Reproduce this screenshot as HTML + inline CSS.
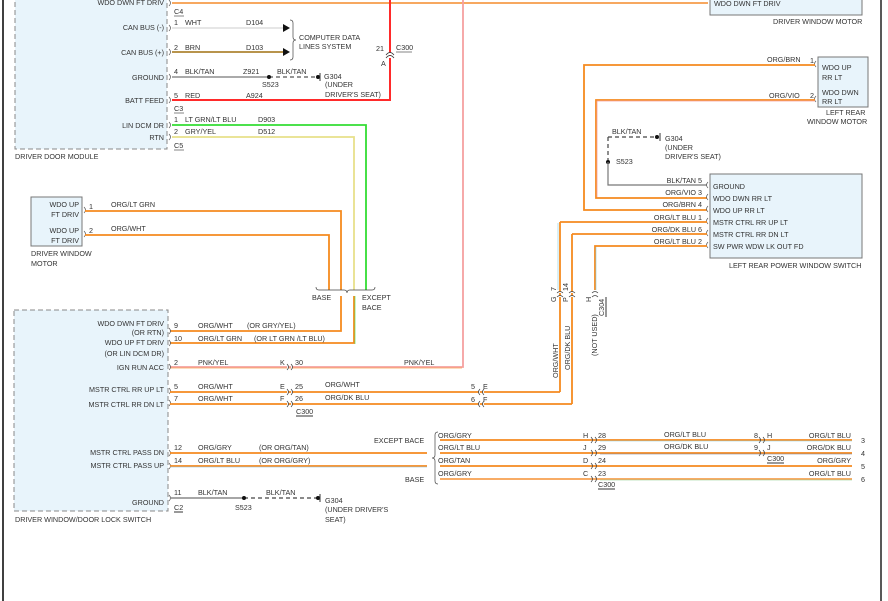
<!DOCTYPE html>
<html><head><meta charset="utf-8"><style>
html,body{margin:0;padding:0;background:#fff;}
svg{display:block;}
text{font-family:"Liberation Sans",sans-serif;font-size:7.2px;fill:#333;}
.r{text-anchor:end;}
</style></head><body>
<svg width="888" height="601" viewBox="0 0 888 601" xmlns="http://www.w3.org/2000/svg">
<!-- frame -->
<line x1="3" y1="0" x2="3" y2="601" stroke="#000" stroke-width="1.5"/>
<line x1="881" y1="0" x2="881" y2="601" stroke="#222" stroke-width="1.5"/>

<!-- driver door module box -->
<rect x="15" y="-5" width="152" height="154" fill="#e8f4fb" stroke="#888" stroke-dasharray="5,3"/>
<text x="15" y="159">DRIVER DOOR MODULE</text>
<text class="r" x="164" y="5">WDO DWN FT DRIV</text>
<text x="174" y="14">C4</text><line x1="174" y1="16" x2="184" y2="16" stroke="#333" stroke-width="0.6"/>
<text class="r" x="164" y="30">CAN BUS (-)</text>
<text class="r" x="164" y="55">CAN BUS (+)</text>
<text class="r" x="164" y="80">GROUND</text>
<text class="r" x="164" y="103">BATT FEED</text>
<text x="174" y="111">C3</text><line x1="174" y1="113" x2="184" y2="113" stroke="#333" stroke-width="0.6"/>
<text class="r" x="164" y="128">LIN DCM DR</text>
<text class="r" x="164" y="140">RTN</text>
<text x="174" y="148">C5</text><line x1="174" y1="150" x2="184" y2="150" stroke="#333" stroke-width="0.6"/>

<!-- top wire -->
<line x1="172" y1="3" x2="708" y2="3" stroke="#f7a860" stroke-width="2"/>
<!-- red batt feed -->
<polyline points="172,100 390,100 390,0" fill="none" stroke="#ff2a2a" stroke-width="2"/>
<path d="M386,55 q4,-5 8,0 M386,58 q4,-5 8,0" fill="#fff" stroke="#333" stroke-width="0.8"/>
<text x="376" y="51">21</text><text x="396" y="50">C300</text><line x1="396" y1="52" x2="412" y2="52" stroke="#333" stroke-width="0.6"/>
<text x="381" y="66">A</text>
<text x="185" y="98">RED</text><text x="246" y="98">A924</text>
<text x="325" y="87">(UNDER</text><text x="325" y="97">DRIVER'S SEAT)</text>

<!-- CAN wires -->
<line x1="172" y1="28" x2="284" y2="28" stroke="#ddd" stroke-width="1.5"/>
<path d="M283,24 l7,4 l-7,4z" fill="#111"/>
<line x1="172" y1="52" x2="284" y2="52" stroke="#a07010" stroke-width="1.5"/>
<path d="M283,48 l7,4 l-7,4z" fill="#111"/>
<text x="174" y="25">1</text><text x="185" y="25">WHT</text><text x="246" y="25">D104</text>
<text x="174" y="50">2</text><text x="185" y="50">BRN</text><text x="246" y="50">D103</text>
<path d="M290,20 q3,0 3,3 v14 q0,3 3,3 q-3,0 -3,3 v14 q0,3 -3,3" fill="none" stroke="#444" stroke-width="0.7"/>
<text x="299" y="40">COMPUTER DATA</text><text x="299" y="49">LINES SYSTEM</text>

<!-- ground -->
<line x1="172" y1="77" x2="269" y2="77" stroke="#777" stroke-width="1.2"/>
<line x1="269" y1="77" x2="318" y2="77" stroke="#555" stroke-width="1.2" stroke-dasharray="4,3"/>
<circle cx="269" cy="77" r="2" fill="#111"/><circle cx="318" cy="77" r="2" fill="#111"/>
<line x1="320" y1="73" x2="320" y2="81" stroke="#333"/>
<text x="174" y="74">4</text><text x="185" y="74">BLK/TAN</text><text x="243" y="74">Z921</text><text x="277" y="74">BLK/TAN</text>
<text x="262" y="87">S523</text><text x="324" y="79">G304</text>
<text x="174" y="98">5</text>

<!-- LIN / RTN -->
<polyline points="172,125 366,125 366,290" fill="none" stroke="#33dd33" stroke-width="1.8"/>
<polyline points="172,137 354,137 354,290" fill="none" stroke="#e8e08a" stroke-width="1.8"/>
<text x="174" y="122">1</text><text x="185" y="122">LT GRN/LT BLU</text><text x="258" y="122">D903</text>
<text x="174" y="134">2</text><text x="185" y="134">GRY/YEL</text><text x="258" y="134">D512</text>

<!-- pin brackets on module -->
<g stroke="#555" stroke-width="0.7" fill="none">
<path d="M169,0 q3,3 0,6"/><path d="M169,25 q3,3 0,6"/><path d="M169,49 q3,3 0,6"/><path d="M169,74 q3,3 0,6"/><path d="M169,97 q3,3 0,6"/><path d="M169,122 q3,3 0,6"/><path d="M169,134 q3,3 0,6"/>
</g>

<!-- driver window motor -->
<rect x="31" y="197" width="51" height="49" fill="#e8f4fb" stroke="#777"/>
<text class="r" x="79" y="207">WDO UP</text><text class="r" x="79" y="217">FT DRIV</text>
<text class="r" x="79" y="233">WDO UP</text><text class="r" x="79" y="243">FT DRIV</text>
<text x="31" y="256">DRIVER WINDOW</text><text x="31" y="266">MOTOR</text>
<text x="89" y="209">1</text><text x="89" y="233">2</text>
<path d="M84,207 q3,3 0,6 M84,231 q3,3 0,6" stroke="#555" stroke-width="0.7" fill="none"/>
<polyline points="85,211 341,211 341,290" fill="none" stroke="#f58a1f" stroke-width="1.8"/>
<polyline points="85,235 329,235 329,290" fill="none" stroke="#f58a1f" stroke-width="1.8"/>
<text x="111" y="207">ORG/LT GRN</text><text x="111" y="231">ORG/WHT</text>
<path d="M316,287 q0,3 3,3 h25 q3,0 3,3 q0,-3 3,-3 h22 q3,0 3,-3" fill="none" stroke="#444" stroke-width="0.7"/>
<text x="312" y="300">BASE</text><text x="362" y="300">EXCEPT</text><text x="362" y="310">BACE</text>
<polyline points="341,296 341,331 170,331" fill="none" stroke="#f58a1f" stroke-width="1.8"/>
<polyline points="354,296 354,343 170,343" fill="none" stroke="#f58a1f" stroke-width="1.8"/>
<line x1="354" y1="296" x2="354" y2="344" stroke="#4d4" stroke-width="0.6" transform="translate(1,0)"/>

<!-- pink vertical -->
<polyline points="170,367 463,367 463,0" fill="none" stroke="#f5a0a0" stroke-width="1.8"/>
<line x1="170" y1="368" x2="462" y2="368" stroke="#f7a050" stroke-width="0.8"/>

<!-- lower switch box -->
<rect x="14" y="310" width="154" height="201" fill="#e8f4fb" stroke="#888" stroke-dasharray="5,3"/>
<text x="15" y="522">DRIVER WINDOW/DOOR LOCK SWITCH</text>
<text class="r" x="164" y="326">WDO DWN FT DRIV</text><text class="r" x="164" y="335">(OR RTN)</text>
<text class="r" x="164" y="345">WDO UP FT DRIV</text><text class="r" x="164" y="356">(OR LIN DCM DR)</text>
<text class="r" x="164" y="370">IGN RUN ACC</text>
<text class="r" x="164" y="392">MSTR CTRL RR UP LT</text>
<text class="r" x="164" y="407">MSTR CTRL RR DN LT</text>
<text class="r" x="164" y="455">MSTR CTRL PASS DN</text>
<text class="r" x="164" y="468">MSTR CTRL PASS UP</text>
<text class="r" x="164" y="505">GROUND</text>
<g stroke="#555" stroke-width="0.7" fill="none">
<path d="M169,328 q3,3 0,6"/><path d="M169,340 q3,3 0,6"/><path d="M169,364 q3,3 0,6"/><path d="M169,388 q3,3 0,6"/><path d="M169,400 q3,3 0,6"/><path d="M169,450 q3,3 0,6"/><path d="M169,463 q3,3 0,6"/><path d="M169,495 q3,3 0,6"/>
</g>
<text x="174" y="328">9</text><text x="198" y="328">ORG/WHT</text><text x="247" y="328">(OR GRY/YEL)</text>
<text x="174" y="341">10</text><text x="198" y="341">ORG/LT GRN</text><text x="254" y="341">(OR LT GRN /LT BLU)</text>
<text x="174" y="365">2</text><text x="198" y="365">PNK/YEL</text><text x="404" y="365">PNK/YEL</text>
<text x="280" y="365">K</text><text x="295" y="365">30</text>

<line x1="170" y1="392" x2="560" y2="392" stroke="#f58a1f" stroke-width="1.8"/>
<line x1="560" y1="392" x2="560" y2="222" stroke="#f58a1f" stroke-width="1.8"/>
<line x1="170" y1="404" x2="572" y2="404" stroke="#f58a1f" stroke-width="1.8"/>
<line x1="572" y1="404" x2="572" y2="234" stroke="#f58a1f" stroke-width="1.8"/>
<text x="174" y="389">5</text><text x="198" y="389">ORG/WHT</text><text x="280" y="389">E</text><text x="295" y="389">25</text><text x="325" y="387">ORG/WHT</text>
<text x="174" y="401">7</text><text x="198" y="401">ORG/WHT</text><text x="280" y="401">F</text><text x="295" y="401">26</text><text x="325" y="400">ORG/DK BLU</text>
<text x="471" y="389">5</text><text x="483" y="389">E</text><text x="471" y="402">6</text><text x="483" y="402">F</text>
<text x="296" y="414">C300</text><line x1="296" y1="416" x2="313" y2="416" stroke="#333"/>
<g stroke="#444" stroke-width="0.8" fill="#fff">
<path d="M287,364 q3,3 0,6 M291,364 q3,3 0,6"/>
<path d="M287,389 q3,3 0,6 M291,389 q3,3 0,6"/>
<path d="M287,401 q3,3 0,6 M291,401 q3,3 0,6"/>
<path d="M480,389 q-3,3 0,6 M484,389 q-3,3 0,6"/>
<path d="M480,401 q-3,3 0,6 M484,401 q-3,3 0,6"/>
</g>

<!-- pass wires -->
<line x1="170" y1="453" x2="427" y2="453" stroke="#f58a1f" stroke-width="1.8"/>
<line x1="170" y1="466" x2="427" y2="466" stroke="#f58a1f" stroke-width="1.8"/>
<line x1="170" y1="467" x2="427" y2="467" stroke="#8bd" stroke-width="0.6"/>
<text x="174" y="450">12</text><text x="198" y="450">ORG/GRY</text><text x="259" y="450">(OR ORG/TAN)</text>
<text x="174" y="463">14</text><text x="198" y="463">ORG/LT BLU</text><text x="259" y="463">(OR ORG/GRY)</text>
<path d="M438,432 q-3,0 -3,3 v20 q0,3 -3,3 q3,0 3,3 v20 q0,3 3,3" fill="none" stroke="#444" stroke-width="0.7"/>
<text x="374" y="443">EXCEPT BACE</text><text x="405" y="482">BASE</text>
<line x1="440" y1="440" x2="852" y2="440" stroke="#f58a1f" stroke-width="1.8"/>
<line x1="440" y1="453" x2="852" y2="453" stroke="#f58a1f" stroke-width="1.8"/>
<line x1="600" y1="454" x2="852" y2="454" stroke="#778" stroke-width="0.6"/>
<line x1="440" y1="466" x2="852" y2="466" stroke="#f58a1f" stroke-width="1.8"/>
<line x1="440" y1="479" x2="852" y2="479" stroke="#f7a050" stroke-width="1.8"/>
<line x1="600" y1="441" x2="852" y2="441" stroke="#8cd" stroke-width="0.5"/>
<line x1="600" y1="480" x2="852" y2="480" stroke="#8c8" stroke-width="0.5"/>
<text x="438" y="438">ORG/GRY</text><text x="438" y="450">ORG/LT BLU</text><text x="438" y="463">ORG/TAN</text><text x="438" y="476">ORG/GRY</text>
<text x="583" y="438">H</text><text x="598" y="438">28</text>
<text x="583" y="450">J</text><text x="598" y="450">29</text>
<text x="583" y="463">D</text><text x="598" y="463">24</text>
<text x="583" y="476">C</text><text x="598" y="476">23</text>
<text x="598" y="487">C300</text><line x1="598" y1="489" x2="615" y2="489" stroke="#333"/>
<text x="664" y="437">ORG/LT BLU</text><text x="664" y="449">ORG/DK BLU</text>
<text x="754" y="438">8</text><text x="767" y="438">H</text><text x="754" y="450">9</text><text x="767" y="450">J</text>
<text x="767" y="461">C300</text><line x1="767" y1="463" x2="784" y2="463" stroke="#333"/>
<text class="r" x="851" y="438">ORG/LT BLU</text><text class="r" x="851" y="450">ORG/DK BLU</text><text class="r" x="851" y="463">ORG/GRY</text><text class="r" x="851" y="476">ORG/LT BLU</text>
<text x="861" y="443">3</text><text x="861" y="456">4</text><text x="861" y="469">5</text><text x="861" y="482">6</text>
<g stroke="#444" stroke-width="0.8" fill="none">
<path d="M591,437 q3,3 0,6 M595,437 q3,3 0,6"/><path d="M591,450 q3,3 0,6 M595,450 q3,3 0,6"/>
<path d="M591,463 q3,3 0,6 M595,463 q3,3 0,6"/><path d="M591,476 q3,3 0,6 M595,476 q3,3 0,6"/>
<path d="M759,437 q3,3 0,6 M763,437 q3,3 0,6"/><path d="M759,450 q3,3 0,6 M763,450 q3,3 0,6"/>
</g>

<!-- lower ground -->
<line x1="170" y1="498" x2="244" y2="498" stroke="#888" stroke-width="1.5"/>
<line x1="244" y1="498" x2="318" y2="498" stroke="#444" stroke-width="1.2" stroke-dasharray="4,3"/>
<circle cx="244" cy="498" r="2" fill="#111"/><circle cx="318" cy="498" r="2" fill="#111"/>
<line x1="320" y1="494" x2="320" y2="502" stroke="#333"/>
<text x="174" y="495">11</text><text x="198" y="495">BLK/TAN</text><text x="266" y="495">BLK/TAN</text>
<text x="235" y="510">S523</text><text x="174" y="510">C2</text><line x1="174" y1="512" x2="183" y2="512" stroke="#333"/>
<text x="325" y="503">G304</text><text x="325" y="512">(UNDER DRIVER'S</text><text x="325" y="522">SEAT)</text>

<!-- top right driver window motor -->
<rect x="710" y="-5" width="152" height="20" fill="#e8f4fb" stroke="#777"/>
<text x="714" y="6">WDO DWN FT DRIV</text>
<text x="773" y="24">DRIVER WINDOW MOTOR</text>

<!-- left rear window motor -->
<rect x="818" y="57" width="50" height="50" fill="#e8f4fb" stroke="#777"/>
<text x="822" y="70">WDO UP</text><text x="822" y="80">RR LT</text><text x="822" y="95">WDO DWN</text><text x="822" y="104">RR LT</text>
<text x="826" y="115">LEFT REAR</text><text x="807" y="124">WINDOW MOTOR</text>
<text x="810" y="63">1</text><text x="810" y="98">2</text>
<path d="M816,61 q-3,3 0,6 M816,96 q-3,3 0,6" stroke="#555" stroke-width="0.7" fill="none"/>
<text x="767" y="62">ORG/BRN</text><text x="769" y="98">ORG/VIO</text>
<polyline points="815,65 584,65 584,210 707,210" fill="none" stroke="#f58a1f" stroke-width="1.8"/>
<polyline points="815,100 596,100 596,198 707,198" fill="none" stroke="#f58a1f" stroke-width="1.8"/>
<polyline points="815,101 597,101 597,197" fill="none" stroke="#f5a0a0" stroke-width="0.8"/>

<!-- BLK/TAN ground right -->
<line x1="608" y1="137" x2="608" y2="160" stroke="#444" stroke-width="1.2" stroke-dasharray="4,3"/>
<line x1="608" y1="137" x2="657" y2="137" stroke="#444" stroke-width="1.2" stroke-dasharray="4,3"/>
<circle cx="657" cy="137" r="2" fill="#111"/><line x1="660" y1="133" x2="660" y2="141" stroke="#333"/>
<circle cx="608" cy="162" r="2" fill="#111"/>
<polyline points="608,162 608,185 707,185" fill="none" stroke="#777" stroke-width="1.2"/>
<text x="612" y="134">BLK/TAN</text><text x="665" y="141">G304</text><text x="665" y="150">(UNDER</text><text x="665" y="159">DRIVER'S SEAT)</text>
<text x="616" y="164">S523</text>

<!-- left rear power window switch -->
<rect x="710" y="174" width="152" height="84" fill="#e8f4fb" stroke="#777"/>
<text x="713" y="189">GROUND</text><text x="713" y="201">WDO DWN RR LT</text><text x="713" y="213">WDO UP RR LT</text>
<text x="713" y="225">MSTR CTRL RR UP LT</text><text x="713" y="237">MSTR CTRL RR DN LT</text><text x="713" y="249">SW PWR WDW LK OUT FD</text>
<text x="729" y="268">LEFT REAR POWER WINDOW SWITCH</text>
<g stroke="#555" stroke-width="0.7" fill="none">
<path d="M708,182 q-3,3 0,6"/><path d="M708,194 q-3,3 0,6"/><path d="M708,206 q-3,3 0,6"/><path d="M708,218 q-3,3 0,6"/><path d="M708,230 q-3,3 0,6"/><path d="M708,242 q-3,3 0,6"/>
</g>
<text class="r" x="702" y="183">BLK/TAN  5</text><text class="r" x="702" y="195">ORG/VIO  3</text><text class="r" x="702" y="207">ORG/BRN  4</text>
<text class="r" x="702" y="220">ORG/LT BLU  1</text><text class="r" x="702" y="232">ORG/DK BLU  6</text><text class="r" x="702" y="244">ORG/LT BLU  2</text>
<polyline points="707,222 560,222" fill="none" stroke="#f58a1f" stroke-width="1.8"/>
<line x1="558" y1="223" x2="558" y2="290" stroke="#8cd" stroke-width="0.6"/>
<polyline points="707,234 572,234" fill="none" stroke="#f58a1f" stroke-width="1.8"/>
<polyline points="707,246 595,246 595,290" fill="none" stroke="#f58a1f" stroke-width="1.8"/>
<line x1="596" y1="247" x2="596" y2="290" stroke="#8cd" stroke-width="0.6"/>
<g stroke="#444" stroke-width="0.8" fill="#fff">
<path d="M557,293 q3,-3 6,0 M557,297 q3,-3 6,0"/>
<path d="M569,293 q3,-3 6,0 M569,297 q3,-3 6,0"/>
<path d="M592,293 q3,-3 6,0 M592,297 q3,-3 6,0"/>
</g>
<text transform="translate(556,302) rotate(-90)">G</text><text transform="translate(556,291) rotate(-90)">7</text>
<text transform="translate(568,302) rotate(-90)">P</text><text transform="translate(568,291) rotate(-90)">14</text>
<text transform="translate(591,302) rotate(-90)">H</text>
<text transform="translate(604,316) rotate(-90)">C304</text>
<line x1="606" y1="297" x2="606" y2="317" stroke="#333"/>
<text transform="translate(558,378) rotate(-90)">ORG/WHT</text>
<text transform="translate(570,370) rotate(-90)">ORG/DK BLU</text>
<text transform="translate(597,356) rotate(-90)">(NOT USED)</text>
</svg>
</body></html>
